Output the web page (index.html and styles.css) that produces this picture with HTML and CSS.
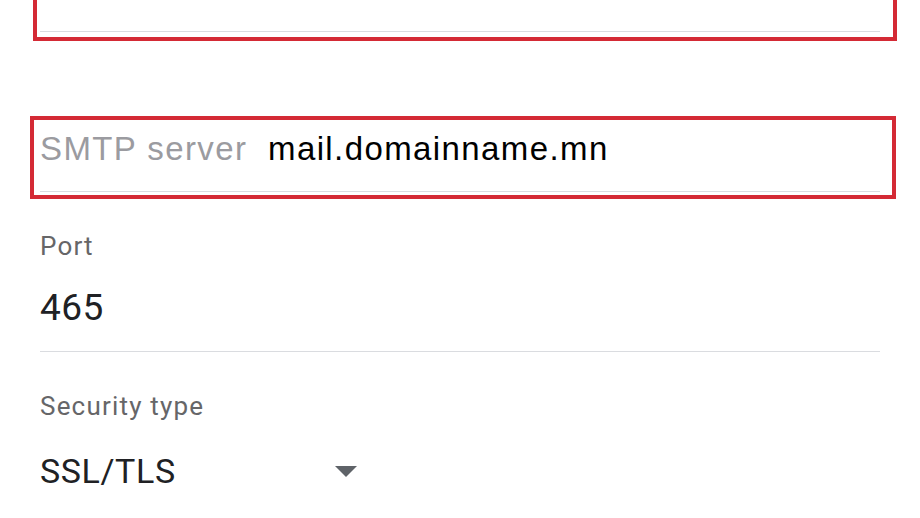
FILE: index.html
```html
<!DOCTYPE html>
<html>
	<head>
		<meta charset="UTF-8">
		<title>Outgoing server settings</title>
		<link rel="stylesheet" href="styles.css">
	</head>
	<body>
		<div class="form">
			<div class="mark mark-top">
				<div class="field blank"></div>
			</div>

			<div class="mark mark-smtp">
				<div class="field inline">
					<span class="inline-label">SMTP server</span>
					<span class="inline-value">mail.domainname.mn</span>
				</div>
			</div>

			<div class="field port">
				<div class="label">Port</div>
				<div class="value">465</div>
			</div>

			<div class="field security">
				<div class="label">Security type</div>
				<div class="value select">
					<span>SSL/TLS</span>
					<svg class="arrow" width="22" height="11" viewBox="0 0 22 11">
						<path d="M0 0 L22 0 L11 11 Z" fill="#5f6368"/>
					</svg>
				</div>
			</div>
		</div>
	</body>
</html>
```

FILE: styles.css
```css
body {
	margin: 0;
	background-color: #fff;
	font-family: Roboto, "Liberation Sans", sans-serif;
	overflow: hidden;
}
.form {
	width: 840px;
	padding: 0 40px;
}
.field {
	border-bottom: 1px solid #dadce0;
}
.mark {
	border: 4px solid #d42a35;
}
.mark-top {
	margin: -40px -17px 0 -7px;
	padding: 0 13px 5px 3px;
}
.blank {
	height: 67px;
}
.mark-smtp {
	margin: 75px -16px 0 -10px;
	padding: 0 12px 3px 6px;
}
.inline {
	display: flex;
	align-items: baseline;
	box-sizing: border-box;
	height: 72px;
	padding-top: 9px;
	font-family: "Liberation Sans", Arial, sans-serif;
	font-size: 33px;
	line-height: 40px;
	letter-spacing: 1.4px;
}
.inline-label {
	width: 228px;
	color: #9b9ba0;
}
.inline-value {
	color: #000;
}
.label {
	font-size: 26px;
	line-height: 32px;
	color: #666668;
	letter-spacing: 1.2px;
}
.value {
	font-size: 34px;
	line-height: 44px;
	color: #202124;
	letter-spacing: 0.6px;
}
.port {
	margin-top: 31px;
	padding-bottom: 21px;
}
.port .value {
	margin-top: 24px;
	font-size: 37px;
	letter-spacing: 0.4px;
}
.security {
	margin-top: 38px;
	border-bottom: none;
}
.security .value {
	margin-top: 27px;
}
.select {
	display: flex;
	justify-content: space-between;
	align-items: center;
	width: 317px;
}
```
